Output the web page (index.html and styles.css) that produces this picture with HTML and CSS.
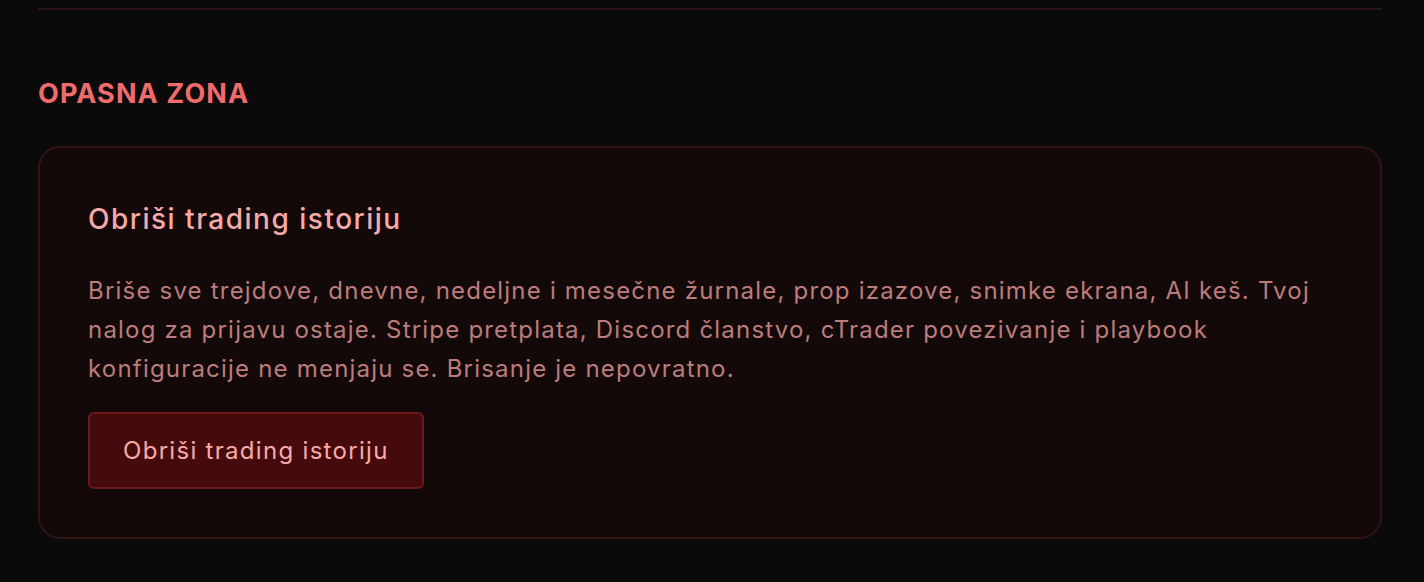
FILE: index.html
```html
<!DOCTYPE html>
<html lang="sr">
<head>
<meta charset="utf-8">
<title>Opasna zona</title>
<link rel="stylesheet" href="styles.css">
</head>
<body>
<div class="page">
  <div class="divider"></div>
  <section class="danger">
    <h2 class="danger-label">OPASNA ZONA</h2>
    <div class="danger-card">
      <h3 class="card-title">Obriši trading istoriju</h3>
      <p class="card-text">Briše sve trejdove, dnevne, nedeljne i mesečne žurnale, prop izazove, snimke ekrana, AI keš. Tvoj nalog za prijavu ostaje. Stripe pretplata, Discord članstvo, cTrader povezivanje i playbook konfiguracije ne menjaju se. Brisanje je nepovratno.</p>
      <button class="danger-btn" type="button">Obriši trading istoriju</button>
    </div>
  </section>
</div>
</body>
</html>
```

FILE: styles.css
```css
html, body {
  margin: 0;
  padding: 0;
  background: #0a0a0a;
  height: 100%;
}
body {
  font-family: Inter, "Noto Sans", "Liberation Sans", sans-serif;
  color: #fca5a5;
}
.page {
  padding: 8px 42px 0 38px;
}
.divider {
  height: 2px;
  background: #2a1414;
}
.danger {
  padding-top: 68px;
}
.danger-label {
  margin: 0;
  font-size: 27px;
  line-height: 32px;
  font-weight: 700;
  letter-spacing: 1.1px;
  color: #f06b6b;
}
.danger-card {
  margin-top: 36px;
  border: 2px solid #331414;
  border-radius: 22px;
  background: #130909;
  padding: 51px 48px 48px;
}
.card-title {
  margin: 0;
  font-size: 28px;
  line-height: 40px;
  font-weight: 500;
  letter-spacing: 1.5px;
  color: #f6a9a9;
}
.card-text {
  margin: 32px 0 0;
  font-size: 24px;
  line-height: 39px;
  letter-spacing: 1.2px;
  color: #bc7c7c;
}
.danger-btn {
  display: block;
  margin-top: 24px;
  height: 77px;
  padding: 0 33px;
  font-family: inherit;
  font-size: 24px;
  font-weight: 400;
  letter-spacing: 1.3px;
  color: #f8aaaa;
  background: #450a0c;
  border: 2px solid #6a1a1c;
  border-radius: 6px;
}
```
